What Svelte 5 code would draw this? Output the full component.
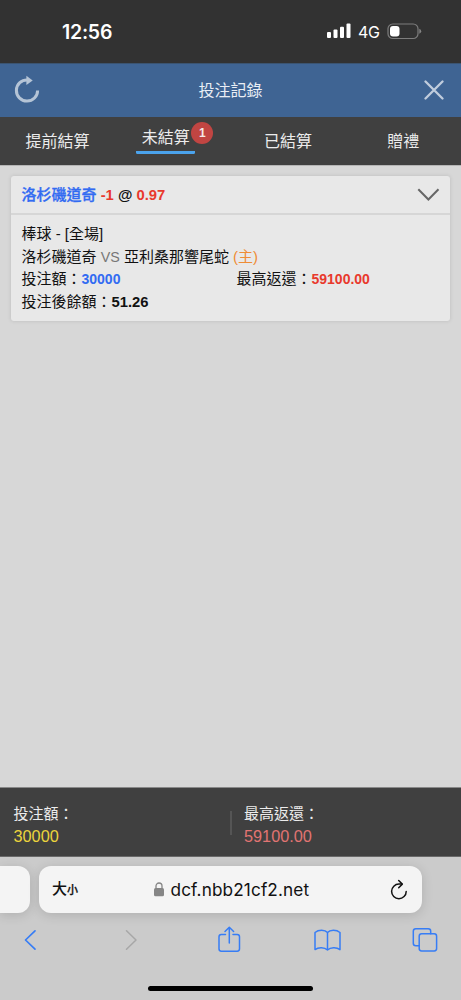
<script>
  const tabs = [
    { label: '提前結算' },
    { label: '未結算', count: 1 },
    { label: '已結算' },
    { label: '贈禮' }
  ];
</script>

<div class="screen">
  <div class="status">
    <span class="clock">12:56</span>
    <svg class="signal" width="24" height="16" viewBox="0 0 24 16" fill="#fff">
      <rect x="0" y="9" width="4" height="6" rx="1" />
      <rect x="6.5" y="6.5" width="4" height="8.5" rx="1" />
      <rect x="13" y="3.7" width="4" height="11.3" rx="1" />
      <rect x="19.5" y="0.5" width="4" height="14.5" rx="1" />
    </svg>
    <span class="net">4G</span>
    <svg class="battery" width="35" height="17" viewBox="0 0 35 17">
      <rect x="1" y="1" width="30" height="14.5" rx="4.8" fill="none" stroke="#7d7d7d" stroke-width="1.2" />
      <rect x="3" y="3" width="9.5" height="10.5" rx="3" fill="#fff" />
      <path d="M32.3 5.8 Q34.2 6.5 34.2 8.3 Q34.2 10 32.3 10.8Z" fill="#858585" />
    </svg>
  </div>

  <header>
    <svg class="refresh" width="28" height="30" viewBox="0 0 28 30">
      <path d="M14.5 5.9 A10.6 10.6 0 1 0 24.6 16.4" fill="none" stroke="#b5c4d6" stroke-width="3" />
      <path d="M13.4 1.8 L19.7 6.4 L13.4 11Z" fill="#b5c4d6" />
    </svg>
    <h1>投注記錄</h1>
    <svg class="close" width="20" height="20" viewBox="0 0 20 20">
      <path d="M1.5 1.5 L18.5 18.5 M18.5 1.5 L1.5 18.5" stroke="#c1cddd" stroke-width="2.3" stroke-linecap="round" />
    </svg>
  </header>

  <nav class="tabs">
    {#each tabs as tab}
      <div class="tab" class:active={tab.count}>
        <span class="label">{tab.label}</span>
        {#if tab.count}<span class="badge">{tab.count}</span>{/if}
      </div>
    {/each}
  </nav>

  <main>
    <article>
      <div class="head">
        <span class="pick"><span class="blue">洛杉磯道奇</span> <span class="red">-1</span> @ <span class="red">0.97</span></span>
        <svg width="23" height="14" viewBox="0 0 23 14">
          <path d="M1.3 1.3 L11.4 11.5 L21.5 1.3" fill="none" stroke="#666" stroke-width="2" />
        </svg>
      </div>
      <div class="body">
        <div class="line">棒球 <i>-</i> <i>[</i>全場<i>]</i></div>
        <div class="line">洛杉磯道奇 <i class="vs">VS</i> 亞利桑那響尾蛇 <span class="home"><i>(</i>主<i>)</i></span></div>
        <div class="line pair">
          <span>投注額：<b class="blue">30000</b></span>
          <span>最高返還：<b class="red">59100.00</b></span>
        </div>
        <div class="line">投注後餘額：<b class="rest">51.26</b></div>
      </div>
    </article>
  </main>

  <section class="totals">
    <div class="total"><span>投注額：</span><span class="amount yellow">30000</span></div>
    <div class="total"><span>最高返還：</span><span class="amount pink">59100.00</span></div>
  </section>

  <footer>
    <div class="bars">
      <div class="prev"></div>
      <div class="address">
        <span class="size">大<small>小</small></span>
        <span class="url">
          <svg width="10" height="15" viewBox="0 0 10 15">
            <rect x="0" y="6" width="10" height="8.3" rx="1.5" fill="#858585" />
            <path d="M2 6.5 V4 a3 3 0 0 1 6 0 V6.5" fill="none" stroke="#858585" stroke-width="1.3" />
          </svg>
          dcf.nbb21cf2.net
        </span>
        <svg class="reload" width="18" height="22" viewBox="0 0 18 22" fill="none" stroke="#111" stroke-width="1.5" stroke-linecap="round" stroke-linejoin="round">
          <path d="M11.7 5.1 H9 A7.3 7.3 0 1 0 16.2 12.4" />
          <path d="M8.7 1.5 L12.3 5.1 L8.7 8.7" />
        </svg>
      </div>
    </div>
    <div class="tools">
      <svg width="13" height="28" viewBox="0 0 13 28"><path d="M11 4.8 L1.5 14 L11 23.2" stroke="#377df5" stroke-width="1.7" /></svg>
      <svg width="13" height="28" viewBox="0 0 13 28"><path d="M1.5 4.8 L11 14 L1.5 23.2" stroke="#a7a7a7" stroke-width="1.5" /></svg>
      <svg width="23" height="28" viewBox="0 0 23 28" stroke="#377df5" stroke-width="1.5">
        <path d="M7.5 8.4 H3.3 Q1 8.4 1 10.7 V22.8 Q1 25.2 3.3 25.2 H19.2 Q21.5 25.2 21.5 22.8 V10.7 Q21.5 8.4 19.2 8.4 H15" />
        <path d="M11.3 17 V1.5 M7 5.5 L11.3 1.2 L15.6 5.5" />
      </svg>
      <svg width="27" height="28" viewBox="0 0 27 28" stroke="#377df5" stroke-width="1.5">
        <path d="M13.5 6.5 V24 M13.5 6.5 C11 3.5 4.5 3.5 1 6.5 V23.6 C4.5 21 10.5 21.2 13.5 24 C16.5 21.2 22.5 21 26 23.6 V6.5 C22.5 3.5 16 3.5 13.5 6.5" />
      </svg>
      <svg width="26" height="28" viewBox="0 0 26 28" stroke="#377df5" stroke-width="1.5">
        <rect x="7.2" y="7.8" width="17.4" height="17.2" rx="2.4" />
        <path d="M7.2 19.8 H3.8 Q1.3 19.8 1.3 17.3 V5.2 Q1.3 2.7 3.8 2.7 H16.2 Q18.7 2.7 18.7 5.2 V7.8" />
      </svg>
    </div>
    <div class="home-bar"></div>
  </footer>
</div>

<style>
  :global(body) {
    margin: 0;
  }
  .screen {
    width: 461px;
    height: 1000px;
    display: flex;
    flex-direction: column;
    overflow: hidden;
    background: #d7d7d7;
    font-family: 'Liberation Sans', 'Noto Sans CJK TC', sans-serif;
    color: #111;
  }
  .screen * {
    box-sizing: border-box;
  }
  svg {
    display: block;
    flex: none;
  }
  .status {
    height: 63px;
    flex: none;
    background: #323232;
    color: #fff;
    display: flex;
    align-items: center;
  }
  .clock {
    width: 264px;
    margin-left: 62px;
    font: 600 19.5px/24px Inter, sans-serif;
    letter-spacing: -0.25px;
  }
  .signal {
    margin-left: 1px;
    margin-top: -1px;
  }
  .net {
    margin-left: 7px;
    width: 29px;
    font: 400 16px/24px Inter, sans-serif;
    letter-spacing: -0.3px;
  }
  .battery {
    margin-top: -1px;
    margin-left: 0;
  }
  header {
    height: 54px;
    flex: none;
    background: #3f6493;
    border-top: 1px solid #3b5471;
    display: flex;
    align-items: center;
    justify-content: space-between;
    padding: 0 17px 0 13px;
  }
  h1 {
    margin: 0 0 0 -4px;
    font-size: 16px;
    line-height: 24px;
    font-weight: 400;
    color: #e9eef5;
  }
  .refresh {
    margin-top: -4px;
  }
  .close {
    margin-top: -2px;
  }
  .tabs {
    height: 48px;
    flex: none;
    display: grid;
    grid-template-columns: repeat(4, 1fr);
    background: #404040;
    color: #ececec;
    font-size: 16px;
  }
  .tab {
    display: flex;
    justify-content: center;
    align-items: center;
    padding-bottom: 2px;
  }
  .active {
    align-items: flex-start;
    padding: 5px 0 0;
  }
  .active .label {
    width: 59px;
    height: 32px;
    margin-left: 4px;
    line-height: 31px;
    text-align: center;
    background: linear-gradient(#4ba3ec, #4ba3ec) bottom / 100% 3px no-repeat;
    border-radius: 1.5px;
  }
  .badge {
    width: 22px;
    height: 22px;
    margin-left: -4px;
    border-radius: 50%;
    background: #c14542;
    color: #f4e8e8;
    font-size: 12px;
    font-weight: 700;
    line-height: 23px;
    text-align: center;
  }
  main {
    height: 622px;
    flex: none;
    border-top: 1px solid #b5b5b5;
    padding: 10px 11px 0;
  }
  article {
    height: 145px;
    width: 439px;
    background: #e8e8e8;
    border-radius: 3px;
    box-shadow: 0 0 4px rgba(0, 0, 0, 0.12);
    font-size: 15px;
  }
  .head {
    height: 39px;
    border-bottom: 2px solid #d6d6d6;
    padding: 0 10px 2px 10.5px;
    display: flex;
    align-items: center;
    justify-content: space-between;
    font-weight: 700;
  }
  .head svg {
    margin-top: 2px;
  }
  .pick {
    font-size: 14.8px;
  }
  .pick .blue {
    font-size: 15px;
    font-weight: 500;
    -webkit-text-stroke: 0.3px #326bf2;
  }
  .blue {
    color: #326bf2;
  }
  .red {
    color: #e8392d;
  }
  .body {
    padding: 8px 11px 0 10.5px;
  }
  .line {
    height: 22.5px;
    line-height: 22.5px;
    white-space: nowrap;
  }
  .line b {
    font-size: 14px;
  }
  .line .rest {
    font-size: 14.8px;
  }
  i {
    font-style: normal;
  }
  .vs {
    font-size: 14.3px;
    color: #777;
  }
  .home {
    color: #ef8c35;
  }
  .pair {
    display: grid;
    grid-template-columns: 215px 1fr;
  }
  .totals {
    height: 70px;
    flex: none;
    background: #404040;
    border-top: 1px solid #888;
    border-bottom: 1px solid #696969;
    display: grid;
    grid-template-columns: 230px 1fr;
    align-items: center;
    color: #ececec;
    font-size: 15px;
  }
  .total {
    display: flex;
    flex-direction: column;
    padding-left: 13.5px;
    line-height: 22px;
    margin-top: 5px;
  }
  .total + .total {
    padding-left: 14px;
    background: linear-gradient(#555, #555) 0 8px / 2px 24px no-repeat;
  }
  .amount {
    font-size: 16.3px;
  }
  .yellow {
    color: #ecd43c;
  }
  .pink {
    color: #e27472;
  }
  footer {
    height: 143px;
    flex: none;
    background: #cbcbcb;
    display: flex;
    flex-direction: column;
    padding-top: 9px;
  }
  .bars {
    display: flex;
    gap: 9px;
    height: 47px;
    flex: none;
  }
  .prev,
  .address {
    height: 47px;
    background: #f4f4f4;
    box-shadow: 0 2px 12px rgba(0, 0, 0, 0.14);
  }
  .prev {
    width: 30px;
    border-radius: 0 12px 12px 0;
  }
  .address {
    width: 383px;
    border-radius: 12px;
    display: flex;
    align-items: center;
    justify-content: space-between;
    padding: 0 14px 0 13px;
  }
  .size {
    width: 101px;
    font-size: 15px;
    font-weight: 500;
    line-height: 24px;
  }
  small {
    font-size: 11px;
    -webkit-text-stroke: 0.3px #111;
  }
  .url {
    width: 236px;
    display: flex;
    align-items: center;
    gap: 7px;
    font: 400 17.2px/24px Inter, sans-serif;
    letter-spacing: 0.12px;
  }
  .tools {
    display: grid;
    grid-template-columns: 101px 92.5px 96px 98.5px 26px;
    height: 28px;
    margin-top: 13px;
    padding-left: 24px;
    fill: none;
    stroke-linecap: round;
    stroke-linejoin: round;
  }
  .home-bar {
    width: 165px;
    height: 5px;
    margin: 32px 0 0 148px;
    background: #000;
    border-radius: 3px;
  }
</style>
